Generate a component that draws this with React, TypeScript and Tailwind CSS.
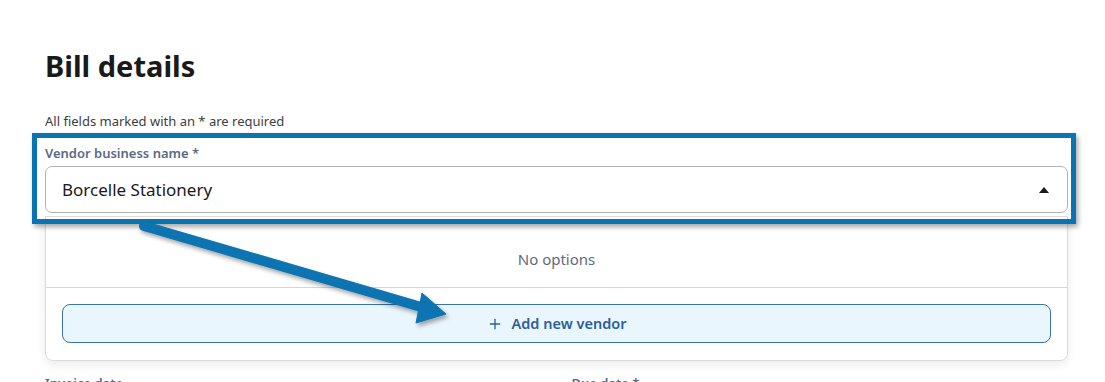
import { Plus } from 'lucide-react';

const font = { fontFamily: '"Noto Sans", "Open Sans", Arial, sans-serif' };

function Annotation() {
  return (
    <>
      {/* highlight frame around the vendor field */}
      <div className="pointer-events-none absolute left-[32px] top-[133px] h-[91px] w-[1044px] border-[5px] border-[#0a73b1] shadow-[2px_3px_5px_rgba(0,0,0,0.35)]" />
      {/* arrow pointing at the add button */}
      <svg className="pointer-events-none absolute left-0 top-0" width="1105" height="382" viewBox="0 0 1105 382">
        <defs>
          <filter id="arrowShadow" x="-10%" y="-10%" width="120%" height="130%">
            <feDropShadow dx="2" dy="3" stdDeviation="2" floodColor="#000" floodOpacity="0.35" />
          </filter>
        </defs>
        <g filter="url(#arrowShadow)" fill="#0a73b1" stroke="#0a73b1">
          <line x1="144" y1="226" x2="428" y2="309" strokeWidth="10" strokeLinecap="round" />
          <polygon points="422,293 446,314 416,323" strokeWidth="1" strokeLinejoin="round" />
        </g>
      </svg>
    </>
  );
}

export default function App() {
  return (
    <div className="relative h-[382px] w-[1105px] overflow-hidden bg-white" style={font}>
      <div className="pl-[45px] pr-[37px] pt-[46px]">
        <h1 className="text-[29px] font-bold leading-[40px] text-[#1a1a1a]">Bill details</h1>

        <p className="mt-[27px] text-[13px] leading-[16px] text-[#3d3d3d]">
          All fields marked with an * are required
        </p>

        <div className="mt-[16px]">
          <label className="block text-[13px] font-semibold leading-[16px] text-[#5b6a85]">
            Vendor business name *
          </label>
          <div className="mt-[5px] flex h-[47px] items-center justify-between rounded-[7px] border border-[#b3b3b3] pl-[16px] pr-[18px]">
            <span className="text-[17px] text-[#1a1a1a]">Borcelle Stationery</span>
            <svg width="10" height="6" viewBox="0 0 10 6">
              <polygon points="5,0 10,6 0,6" fill="#1a1a1a" />
            </svg>
          </div>

          <div className="mt-[3px] rounded-b-[8px] border border-[#dcdcdc] bg-white shadow-[0_4px_10px_rgba(0,0,0,0.08)]">
            <div className="flex h-[70px] items-center justify-center pt-[14px] text-[15px] text-[#5e6a80]">
              No options
            </div>
            <div className="border-t border-[#d6d6d6] px-[16px] pb-[17px] pt-[16px]">
              <button className="flex h-[39px] w-full items-center justify-center gap-[9px] rounded-[8px] border border-[#3a72aa] bg-[#eaf6fd] text-[14.5px] font-semibold text-[#2d5f95]">
                <Plus size={16} strokeWidth={2} />
                Add new vendor
              </button>
            </div>
          </div>
        </div>

        <div className="mt-[14px] grid grid-cols-2 gap-[24px]">
          <span className="text-[13px] font-semibold leading-[16px] text-[#5b6a85]">Invoice date</span>
          <span className="pl-[3px] text-[13px] font-semibold leading-[16px] text-[#5b6a85]">Due date *</span>
        </div>
      </div>

      <Annotation />
    </div>
  );
}
